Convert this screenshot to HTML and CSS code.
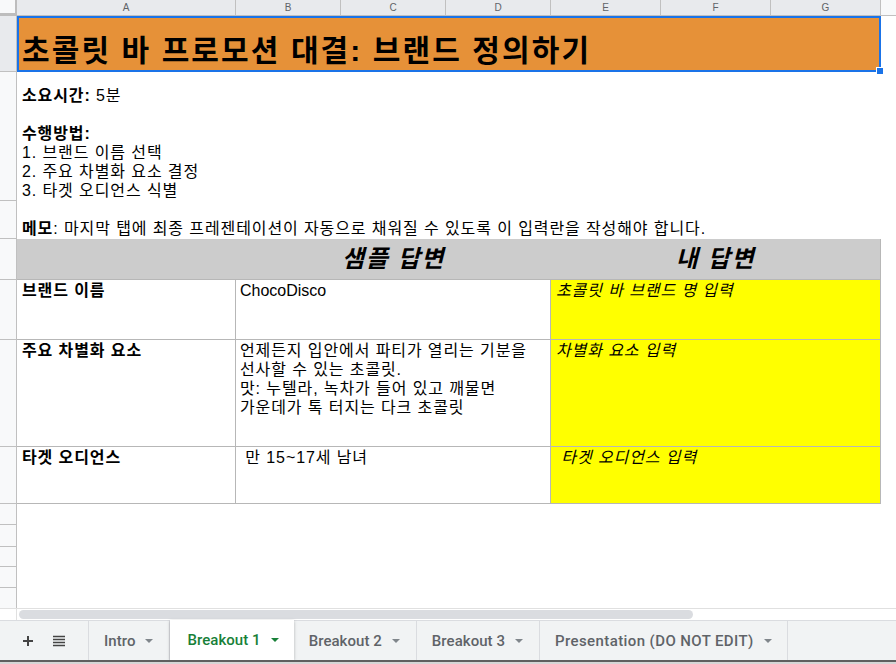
FILE: index.html
```html
<!DOCTYPE html>
<html lang="ko">
<head>
<meta charset="utf-8">
<title>Sheet</title>
<link rel="stylesheet" href="styles.css">
</head>
<body>
<div class="app">
  <div class="sheet">
    <div class="corner"></div>
    <div class="colheads">
      <div class="ch sel wa">A</div>
      <div class="ch sel wb">B</div>
      <div class="ch sel wb">C</div>
      <div class="ch sel wb">D</div>
      <div class="ch sel we">E</div>
      <div class="ch sel we">F</div>
      <div class="ch sel we">G</div>
      <div class="ch wh"></div>
    </div>
    <div class="rowheads">
      <div class="rh sel h1"></div>
      <div class="rh h2"></div>
      <div class="rh h3"></div>
      <div class="rh h4"></div>
      <div class="rh h5"></div>
      <div class="rh h6"></div>
      <div class="rh h7"></div>
      <div class="rh h8"></div>
      <div class="rh h9"></div>
      <div class="rh h10"></div>
      <div class="rh h11"></div>
      <div class="rh h12"></div>
    </div>
    <div class="body">
      <div class="title span3">초콜릿 바 프로모션 대결: 브랜드 정의하기<span class="handle"></span></div>
      <div class="hcell"></div>

      <div class="info span3">
        <div class="ln"><b>소요시간:</b> 5분</div>
        <div class="ln">&nbsp;</div>
        <div class="ln"><b>수행방법:</b></div>
        <div class="ln">1. 브랜드 이름 선택</div>
        <div class="ln">2. 주요 차별화 요소 결정</div>
        <div class="ln">3. 타겟 오디언스 식별</div>
        <div class="ln">&nbsp;</div>
        <div class="ln"><b>메모</b>: 마지막 탭에 최종 프레젠테이션이 자동으로 채워질 수 있도록 이 입력란을 작성해야 합니다.</div>
      </div>
      <div class="hcell"></div>

      <div class="gray"></div>
      <div class="gray ghead">샘플 답변</div>
      <div class="gray ghead glast">내 답변</div>
      <div class="hcell"></div>

      <div class="cell label">브랜드 이름</div>
      <div class="cell latin">ChocoDisco</div>
      <div class="cell input">초콜릿 바 브랜드 명 입력</div>
      <div class="hcell"></div>

      <div class="cell label">주요 차별화 요소</div>
      <div class="cell">언제든지 입안에서 파티가 열리는 기분을<br>선사할 수 있는 초콜릿.<br>맛: 누텔라, 녹차가 들어 있고 깨물면<br>가운데가 톡 터지는 다크 초콜릿</div>
      <div class="cell input">차별화 요소 입력</div>
      <div class="hcell"></div>

      <div class="cell label">타겟 오디언스</div>
      <div class="cell">&nbsp;만 15~17세 남녀</div>
      <div class="cell input">&nbsp;타겟 오디언스 입력</div>
      <div class="hcell"></div>

      <div class="rest"></div>
    </div>
  </div>

  <div class="hscroll">
    <div class="hs-gutter"></div>
    <div class="hs-track"><div class="thumb"></div></div>
  </div>

  <div class="tabbar">
    <div class="tools">
      <svg class="ico" width="12" height="12" viewBox="0 0 12 12"><path d="M6 1v10M1 6h10" stroke="#444" stroke-width="2" fill="none"/></svg>
      <svg class="ico" width="12" height="12" viewBox="0 0 12 12"><path d="M0 1.5h12M0 4.5h12M0 7.5h12M0 10.5h12" stroke="#444" stroke-width="1.6" fill="none"/></svg>
    </div>
    <div class="tab"><span>Intro</span><i class="tri"></i></div>
    <div class="tab active"><span>Breakout 1</span><i class="tri"></i></div>
    <div class="tab"><span>Breakout 2</span><i class="tri"></i></div>
    <div class="tab"><span>Breakout 3</span><i class="tri"></i></div>
    <div class="tab wide"><span>Presentation (DO NOT EDIT)</span><i class="tri"></i></div>
    <div class="tabfill"></div>
  </div>
  <div class="taskbar"></div>
</div>
</body>
</html>
```

FILE: styles.css
```css
* { box-sizing: border-box; }
html, body { margin: 0; padding: 0; }
body {
  width: 896px;
  height: 664px;
  overflow: hidden;
  background: #fff;
  font-family: "Liberation Sans", "Noto Sans CJK KR", sans-serif;
}
.app { display: flex; flex-direction: column; width: 896px; height: 664px; }

.sheet {
  display: grid;
  grid-template-columns: 17px 879px;
  grid-template-rows: 16px 592px;
  height: 608px;
}
.corner {
  background: #f8f9fa;
  border-right: 2px solid #bdbdbd;
  border-bottom: 3px solid #bdbdbd;
}
.colheads { display: flex; }
.ch {
  height: 16px;
  background: #f8f9fa;
  border-right: 1px solid #c0c0c0;
  border-bottom: 1px solid #c0c0c0;
  color: #5f6368;
  font-size: 10px;
  line-height: 15px;
  text-align: center;
}
.ch.sel { background: #e8eaed; }
.wa { width: 219px; }
.wb { width: 105px; }
.we { width: 110px; }
.wh { flex: 1; border-right: none; }

.rowheads { display: flex; flex-direction: column; }
.rh {
  background: #f8f9fa;
  border-right: 1px solid #c0c0c0;
  border-bottom: 1px solid #c0c0c0;
}
.rh.sel { background: #e8eaed; }
.h1 { height: 56px; }
.h2 { height: 129px; }
.h3 { height: 38px; }
.h4 { height: 41px; }
.h5 { height: 60px; }
.h6 { height: 107px; }
.h7 { height: 57px; }
.h8 { height: 21px; }
.h9 { height: 22px; }
.h10 { height: 20px; }
.h11 { height: 21px; }
.h12 { height: 20px; border-bottom: none; }

.body {
  display: grid;
  grid-template-columns: 219px 315px 330px 15px;
  grid-template-rows: 56px 167px 41px 60px 107px 57px 104px;
  font-size: 16px;
  line-height: 19px;
  letter-spacing: 0.9px;
  color: #000;
}
.span3 { grid-column: 1 / 4; }
.hcell { background: #fff; }
.rest { grid-column: 1 / 5; }

.title {
  position: relative;
  background: #e69138;
  border: 2px solid #1a73e8;
  font-size: 30px;
  font-weight: bold;
  line-height: 36px;
  letter-spacing: 2.1px;
  padding: 0 0 1px 3px;
  display: flex;
  align-items: flex-end;
  white-space: nowrap;
}
.handle {
  position: absolute;
  right: -5px;
  bottom: -5px;
  width: 8px;
  height: 8px;
  background: #1a73e8;
  border: 1px solid #fff;
  z-index: 2;
}

.info {
  display: flex;
  flex-direction: column;
  justify-content: flex-end;
  padding: 0 0 1px 5px;
  white-space: nowrap;
}

.gray {
  background: #cccccc;
  border-bottom: 1px solid #b7b7b7;
}
.ghead {
  display: flex;
  align-items: center;
  justify-content: center;
  font-size: 24px;
  font-weight: bold;
  font-style: italic;
  line-height: 28px;
  letter-spacing: 1.6px;
}
.glast { border-right: 1px solid #b7b7b7; }

.cell {
  border-right: 1px solid #b7b7b7;
  border-bottom: 1px solid #b7b7b7;
  padding: 1px 4px 0 4px;
  white-space: nowrap;
}
.latin { letter-spacing: 0; }
.label { font-weight: bold; padding-left: 5px; }
.input {
  background: #ffff00;
  font-style: italic;
  padding-left: 5px;
}

.hscroll {
  height: 12px;
  display: flex;
  border-top: 1px solid #e0e0e0;
}
.hs-gutter { width: 17px; border-right: 1px solid #e0e0e0; }
.hs-track { flex: 1; padding: 1px 0 0 2px; }
.thumb {
  width: 674px;
  height: 9px;
  background: #dadce0;
  border-radius: 5px;
}

.tabbar {
  height: 40px;
  display: flex;
  align-items: stretch;
  background: #f1f3f4;
  border-top: 1px solid #dadce0;
  font-family: Roboto, "Liberation Sans", sans-serif;
  font-weight: 500;
  font-size: 15px;
  letter-spacing: 0.05px;
  color: #5f6368;
}
.tools {
  width: 89px;
  display: flex;
  align-items: center;
  gap: 19px;
  padding-left: 22px;
  border-right: 1px solid #dadce0;
}
.tab {
  display: flex;
  align-items: center;
  gap: 10px;
  padding: 0 16px 0 15px;
  border-right: 1px solid #dadce0;
}
.tab.wide { letter-spacing: 0.4px; padding-right: 15px; }
.tab.active {
  background: #fff;
  color: #188038;
  box-shadow: 0 1px 3px rgba(60, 64, 67, 0.35);
  border-right: none;
  margin-top: -1px;
  padding-left: 17px;
  padding-right: 15px;
}
.tri {
  width: 0;
  height: 0;
  border-left: 4px solid transparent;
  border-right: 4px solid transparent;
  border-top: 4px solid #80868b;
}
.tab.active .tri { border-top-color: #188038; }
.tabfill { flex: 1; }

.taskbar {
  height: 4px;
  background: #d6d6d6;
  border-top: 2px solid #5f5f5f;
}
```
